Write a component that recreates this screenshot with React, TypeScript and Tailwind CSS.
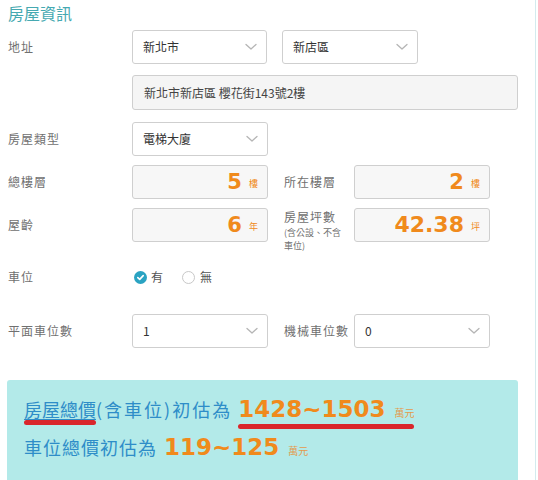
import React from 'react';

const cjk = "font-['Noto_Sans_CJK_TC','Noto_Sans',sans-serif]";
const num = "font-['DejaVu_Sans','Noto_Sans_CJK_TC',sans-serif]";

const Chevron = () => (
    <svg width="12" height="8" viewBox="0 0 12 8" fill="none" className="shrink-0">
        <path d="M1 1.5 L6 6 L11 1.5" stroke="#b5b5b5" strokeWidth="1.3" strokeLinecap="round" strokeLinejoin="round" />
    </svg>
);

const SelectBox = ({ value, width }: { value: string; width: string }) => (
    <div className={`${width} h-[34px] border border-[#cfcfcf] rounded-[3px] bg-white flex items-center justify-between pl-[10px] pr-[9px] text-[12px] text-[#333]`}>
        <span>{value}</span>
        <Chevron />
    </div>
);

const NumberBox = ({ value, unit, big }: { value: string; unit: string; big?: boolean }) => (
    <div className="w-[136px] h-[34px] border border-[#cfcfcf] rounded-[3px] bg-[#f7f7f7] flex items-center justify-end pr-[9px]">
        <span className={`${num} font-bold text-[#f08a1c] ${big ? 'text-[22px]' : 'text-[21px]'} leading-none`}>{value}</span>
        <span className="ml-[7px] text-[9px] text-[#f08a1c] mt-[4px]">{unit}</span>
    </div>
);

const Label = ({ children, w = 'w-[124px]' }: { children: React.ReactNode; w?: string }) => (
    <div className={`${w} shrink-0 text-[12px] text-[#707070] tracking-[1px]`}>{children}</div>
);

const Mark = ({ children }: { children: React.ReactNode }) => (
    <span className="relative inline-block">
        {children}
        <span className="absolute left-0 right-0 bottom-[-4px] h-[5px] rounded-full bg-[#d9262b]" />
    </span>
);

export default function App() {
    return (
        <div className={`${cjk} w-[536px] min-h-[480px] border-r border-[#d3ebee] bg-white pl-2 pt-[3px] overflow-hidden`}>
            <h2 className="text-[16px] leading-[20px] text-[#45a9b1]">房屋資訊</h2>

            {/* 地址 */}
            <div className="mt-[7px] flex items-center">
                <Label>地址</Label>
                <SelectBox value="新北市" width="w-[135px]" />
                <div className="ml-[15px]">
                    <SelectBox value="新店區" width="w-[136px]" />
                </div>
            </div>
            <div className="mt-[11px] ml-[124px] w-[386px] h-[35px] border border-[#cfcfcf] rounded-[3px] bg-[#f5f5f5] flex items-center pl-[11px] text-[12px] text-[#444]">
                新北市新店區 櫻花街143號2樓
            </div>

            {/* 房屋類型 */}
            <div className="mt-[12px] flex items-center">
                <Label>房屋類型</Label>
                <SelectBox value="電梯大廈" width="w-[136px]" />
            </div>

            {/* 樓層 */}
            <div className="mt-[9px] flex items-center">
                <Label>總樓層</Label>
                <NumberBox value="5" unit="樓" />
                <div className="ml-[16px]">
                    <Label w="w-[70px]">所在樓層</Label>
                </div>
                <NumberBox value="2" unit="樓" />
            </div>

            {/* 屋齡 / 坪數 */}
            <div className="mt-[9px] flex items-start">
                <div className="h-[34px] flex items-center">
                    <Label>屋齡</Label>
                </div>
                <NumberBox value="6" unit="年" />
                <div className="ml-[16px] w-[70px] shrink-0 pt-[1px]">
                    <div className="text-[12px] text-[#707070] tracking-[1px] leading-[16px]">房屋坪數</div>
                    <div className="text-[9px] text-[#707070] leading-[13px] w-[64px] mt-[1px]">(含公設、不含車位)</div>
                </div>
                <NumberBox value="42.38" unit="坪" big />
            </div>

            {/* 車位 */}
            <div className="mt-[15px] flex items-center h-[20px]">
                <Label>車位</Label>
                <div className="ml-[2px] flex items-center">
                    <span className="w-[13px] h-[13px] rounded-full bg-[#2aa3c2] flex items-center justify-center">
                        <svg width="9" height="9" viewBox="0 0 9 9" fill="none">
                            <path d="M1.8 4.6 L3.7 6.4 L7.2 2.6" stroke="white" strokeWidth="1.6" strokeLinecap="round" strokeLinejoin="round" />
                        </svg>
                    </span>
                    <span className="ml-[4px] text-[12px] text-[#555]">有</span>
                    <span className="ml-[19px] w-[13px] h-[13px] rounded-full border border-[#c8c8c8] bg-white" />
                    <span className="ml-[5px] text-[12px] text-[#555]">無</span>
                </div>
            </div>

            {/* 車位數 */}
            <div className="mt-[27px] flex items-center">
                <Label>平面車位數</Label>
                <SelectBox value="1" width="w-[136px]" />
                <div className="ml-[16px]">
                    <Label w="w-[70px]">機械車位數</Label>
                </div>
                <SelectBox value="0" width="w-[136px]" />
            </div>

            {/* 估價 */}
            <div className="mt-[32px] -ml-px w-[511px] h-[110px] bg-[#b3eae9] rounded-t-[3px] pl-[17px] pt-[17px]">
                <div className="flex items-baseline text-[18px] text-[#2e8dc8] leading-[24px]">
                    <Mark><span className="underline decoration-1 underline-offset-2">房屋總價</span></Mark>
                    <span className="tracking-[2px]">(含車位)初估為</span>
                    <span className="ml-[6px]">
                        <Mark>
                            <span className={`${num} font-bold text-[23px] text-[#f08a1c]`}>1428~1503</span>
                            <span className="ml-[9px] text-[10px] text-[#e49a4c]">萬元</span>
                        </Mark>
                    </span>
                </div>
                <div className="mt-[10px] flex items-baseline text-[18px] text-[#2e8dc8] leading-[24px]">
                    <span className="tracking-[1px]">車位總價初估為</span>
                    <span className={`${num} ml-[7px] font-bold text-[23px] text-[#f08a1c]`}>119~125</span>
                    <span className="ml-[9px] text-[10px] text-[#e49a4c]">萬元</span>
                </div>
            </div>
        </div>
    );
}
